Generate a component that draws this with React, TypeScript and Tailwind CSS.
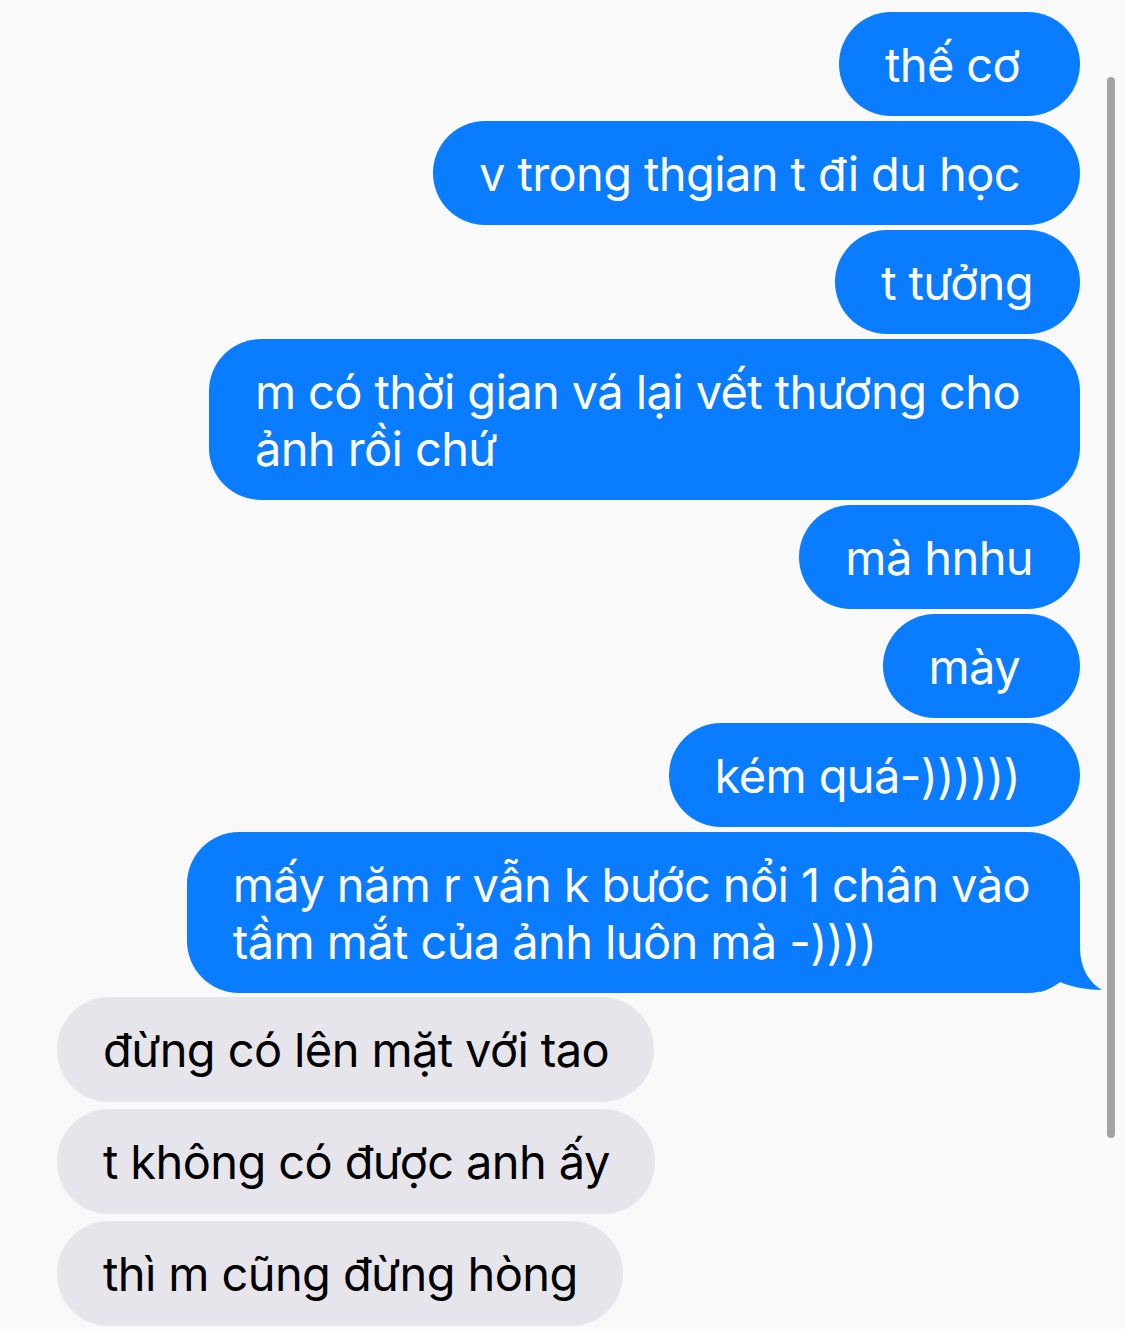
import React from 'react';

type Msg = { lines: string[]; me: boolean; pr?: string; tail?: boolean };

const messages: Msg[] = [
  { lines: ['thế cơ'], me: true, pr: 'pr-[60px]' },
  { lines: ['v trong thgian t đi du học'], me: true, pr: 'pr-[60px]' },
  { lines: ['t tưởng'], me: true, pr: 'pr-[47px]' },
  { lines: ['m có thời gian vá lại vết thương cho', 'ảnh rồi chứ'], me: true, pr: 'pr-[60px]' },
  { lines: ['mà hnhu'], me: true, pr: 'pr-[47px]' },
  { lines: ['mày'], me: true, pr: 'pr-[60px]' },
  { lines: ['kém quá-))))))'], me: true, pr: 'pr-[60px]' },
  {
    lines: ['mấy năm r vẫn k bước nổi 1 chân vào', 'tầm mắt của ảnh luôn mà -))))'],
    me: true,
    pr: 'pr-[50px]',
    tail: true,
  },
];

const replies: Msg[] = [
  { lines: ['đừng có lên mặt với tao'], me: false },
  { lines: ['t không có được anh ấy'], me: false },
  { lines: ['thì m cũng đừng hòng'], me: false },
];

function Tail() {
  return (
    <svg
      className="absolute bottom-0 right-[-24px] h-[60px] w-[64px]"
      viewBox="0 0 64 60"
      fill="#0a7cff"
    >
      <path d="M0 0 L40 0 L40 14 C40 36 50 50 62 57 C50 57 30 54 20 49 C14 53 8 57 0 59 Z" />
    </svg>
  );
}

function Bubble({ msg }: { msg: Msg }) {
  const { lines, me, pr, tail } = msg;
  if (me) {
    return (
      <div
        className={`relative mr-[45px] self-end rounded-[52px] bg-[#0a7cff] py-[23.5px] pl-[46px] ${pr} text-white`}
      >
        {lines.map((l, i) => (
          <div key={i} className="whitespace-nowrap">
            {l}
          </div>
        ))}
        {tail && <Tail />}
      </div>
    );
  }
  return (
    <div className="ml-[57px] self-start rounded-[52px] bg-[#e6e5eb] py-[24px] pl-[46px] pr-[45px] text-black">
      {lines.map((l, i) => (
        <div key={i} className="whitespace-nowrap">
          {l}
        </div>
      ))}
    </div>
  );
}

export default function App() {
  return (
    <div
      className="relative h-[1329px] w-[1125px] overflow-hidden bg-[#f9f9f9] text-[47px] leading-[57px] tracking-[-0.013em]"
      style={{ fontFamily: 'Inter, "Noto Sans", sans-serif' }}
    >
      <div className="flex flex-col pt-[12px]">
        <div className="flex flex-col gap-[5px]">
          {messages.map((m, i) => (
            <Bubble key={i} msg={m} />
          ))}
        </div>
        <div className="mt-[4px] flex flex-col gap-[7px]">
          {replies.map((m, i) => (
            <Bubble key={i} msg={m} />
          ))}
        </div>
      </div>
      {/* scroll indicator */}
      <div className="absolute left-[1107px] top-[77px] h-[1061px] w-[8px] rounded-full bg-[#a3a3a3]" />
    </div>
  );
}
